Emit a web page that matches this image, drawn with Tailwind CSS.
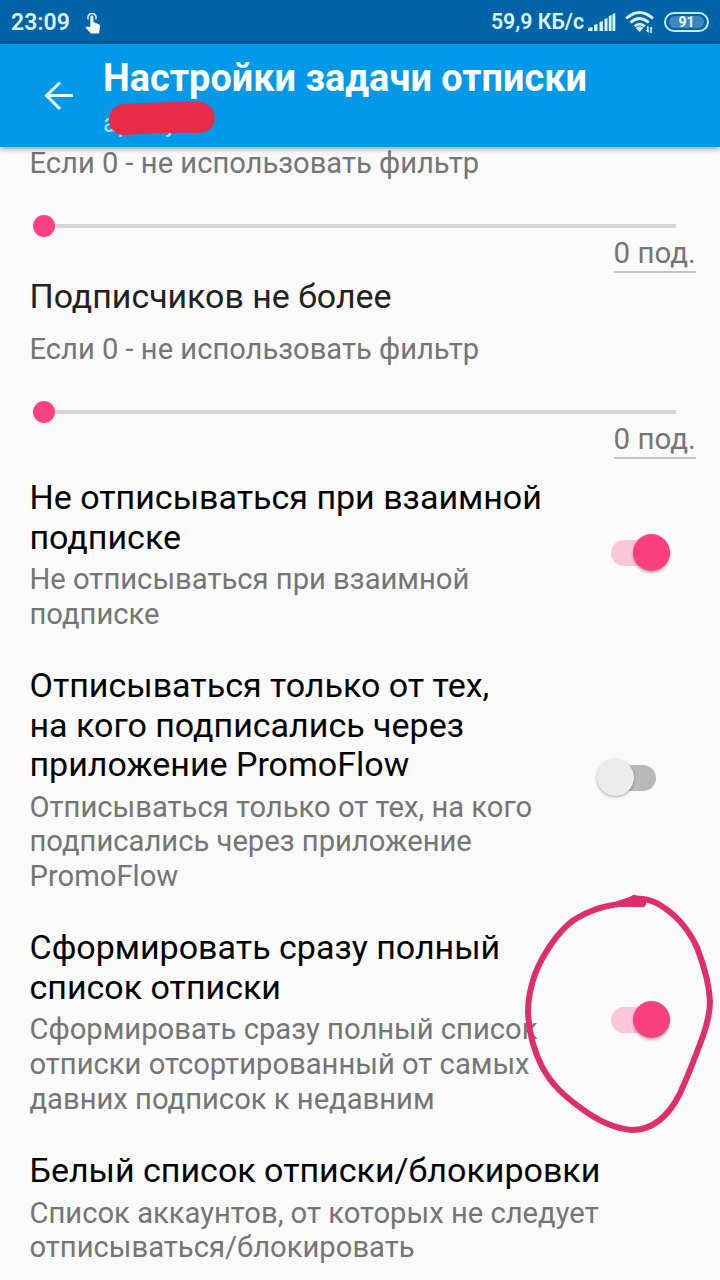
<!DOCTYPE html>
<html lang="ru">
<head>
<meta charset="utf-8">
<title>Настройки задачи отписки</title>
<script src="https://cdn.jsdelivr.net/npm/@tailwindcss/browser@4"></script>
</head>
<body class="bg-[#fafafa]">
<div class="relative flex h-[1280px] w-[720px] flex-col overflow-hidden bg-[#fafafa] font-[Roboto,sans-serif]">
  <div class="flex h-[44px] shrink-0 items-center bg-[#0064a6] pl-[11px] pr-[11px] text-[#d9f3ff]">
    <span class="w-[60px] whitespace-nowrap text-[23px] font-semibold leading-[45px]">23:09</span>
    <svg class="ml-[14px] mt-[2px]" width="17" height="22" viewBox="0 0 17 22"><path d="M3.2 7.500A4.200 4.200 0 1 1 10.800 7.500" fill="none" stroke="currentColor" stroke-width="1.600"/><path d="M5.300 5.200q0-1.700 1.600-1.700t1.600 1.700V10l5.300 2.200q1.400.6 1.200 2.200l-.8 6q-.2 1.200-1.400 1.200H6.800q-.8 0-1.300-.6L.5 15.800l.8-.9q.5-.5 1.200-.3l2.800.7z" fill="#f2fbff"/></svg>
    <span class="ml-auto whitespace-nowrap text-[21.300px] font-semibold leading-[46px]">59,9 КБ/с</span>
    <svg class="ml-[4px]" width="28" height="20" viewBox="0 0 28 20" fill="currentColor"><path d="M0 19v-3l4.500-1v4zM6 19v-6l3.500-1v7zM11.500 19V10l3.500-1v10zM16.500 19V7l3-1v13zM20.800 19V4l2.800-1v16zM24.500 19V2l2.800-1v18z"/></svg>
    <svg class="ml-[9px]" width="30" height="24" viewBox="0 0 30 24"><g fill="none" stroke="currentColor" stroke-width="2.800"><path d="M1.200 8.500Q14.500-3.500 28 8.500"/><path d="M5.500 12.500q9-8 18.300 0"/><path d="M9.500 16.300q5-4.300 10.300 0"/></g><path d="M10.800 18q3.800-2.800 7.600 0l-3.800 4z" fill="currentColor"/><path d="M22.800 16.500v5.500M26 17v6" stroke="currentColor" stroke-width="1.600"/><path d="M20.600 20h3v3zM28.300 19h-3v-2z" fill="currentColor"/></svg>
    <div class="ml-[9px] flex h-[20px] w-[45px] items-center justify-center rounded-full border-2 border-[#c6eaff] p-[3px]"><div class="flex h-[12px] w-full items-center justify-center rounded-full bg-[#3c87c0] text-[14px] font-bold leading-none text-[#eafaff]">91</div></div>
  </div>
  <header class="relative z-10 flex h-[103px] shrink-0 bg-[#0099e8] shadow-[0_1px_6px_rgba(0,0,0,0.5)]">
    <svg class="ml-[44px] mt-[37px] shrink-0" width="30" height="30" viewBox="0 0 30 30" fill="none" stroke="#e6faff" stroke-width="3"><path d="M29 14.500H2.500M16 1.500L2.500 14.500 16 28"/></svg>
    <div class="ml-[29px] flex flex-col">
      <h1 class="mt-[12px] whitespace-nowrap text-[37.900px] font-bold leading-[44px] text-white">Настройки задачи отписки</h1>
      <div class="relative mt-[9px] h-[30px] w-[120px] text-[25px] leading-[30px] text-[#a9ddf7]"><span>a</span><span class="ml-[1px]">p</span><span class="ml-[35px]">j</span>
        <svg class="absolute left-[5px] top-[-9px]" width="108" height="36" viewBox="0 0 108 36"><path d="M17 4Q52 2 90 1.500C112 3 112 32 92 33Q56 32 18 35C-4 36-5 5 17 4z" fill="#e62b4b"/></svg>
      </div>
    </div>
  </header>
  <main class="flex flex-col pl-[29.500px] text-[#757575]">
    <p class="mt-[-1px] text-[29.150px] leading-[35px]">Если 0 - не использовать фильтр</p>
    <div class="mt-[34px] flex h-[22px] items-center"><div class="ml-[3px] size-[22px] rounded-full bg-[#ff4081]"></div><div class="h-[4px] w-[621px] bg-[#d5d5d5]"></div></div>
    <div class="ml-[584px] mt-[2px] h-[34px] w-[82px] whitespace-nowrap border-b-2 border-[#c4c4c4] text-[29.500px] leading-[28px]">0 под.</div>
    <h2 class="mt-[4px] text-[33.900px] leading-[40px] text-[#212121]">Подписчиков не более</h2>
    <p class="mt-[15px] text-[29.150px] leading-[35px]">Если 0 - не использовать фильтр</p>
    <div class="mt-[34px] flex h-[22px] items-center"><div class="ml-[3px] size-[22px] rounded-full bg-[#ff4081]"></div><div class="h-[4px] w-[621px] bg-[#d5d5d5]"></div></div>
    <div class="ml-[584px] mt-[2px] h-[34px] w-[82px] whitespace-nowrap border-b-2 border-[#c4c4c4] text-[29.500px] leading-[28px]">0 под.</div>

    <section class="mt-[19px] flex h-[154px] items-start">
      <div class="w-[567.500px] whitespace-nowrap"><h2 class="text-[34px] leading-[39.500px] text-black">Не отписываться при взаимной<br>подписке</h2><p class="mt-[5px] text-[29.200px] leading-[34.800px]">Не отписываться при взаимной<br>подписке</p></div>
      <div class="mt-[61.500px] flex h-[26px] w-[72.500px] items-center pl-[14px]"><div class="flex h-[26px] w-[58.500px] items-center justify-end rounded-full bg-[#fdc5d9]"><div class="size-[37px] shrink-0 rounded-full bg-[#fb3f7f] shadow-[0_2px_3px_rgba(0,0,0,0.3)]"></div></div></div>
    </section>
    <section class="mt-[34px] flex h-[227px] items-start">
      <div class="w-[567px] whitespace-nowrap"><h2 class="text-[34px] leading-[39.500px] text-black">Отписываться только от тех,<br>на кого подписались через<br>приложение PromoFlow</h2><p class="mt-[5px] text-[29.200px] leading-[34.800px]">Отписываться только от тех, на кого<br>подписались через приложение<br>PromoFlow</p></div>
      <div class="mt-[98.500px] flex h-[26px] w-[59px] items-center rounded-full bg-gradient-to-r from-transparent from-50% to-[#b9b9b9] to-50%"><div class="size-[37px] shrink-0 rounded-full bg-[#ececec] shadow-[0_1px_3px_rgba(0,0,0,0.35)]"></div></div>
    </section>
    <section class="mt-[35px] flex h-[188px] items-start">
      <div class="w-[567.500px] whitespace-nowrap"><h2 class="text-[34px] leading-[39.500px] text-black">Сформировать сразу полный<br>список отписки</h2><p class="mt-[5px] text-[29.200px] leading-[34.800px]">Сформировать сразу полный список<br>отписки отсортированный от самых<br>давних подписок к недавним</p></div>
      <div class="mt-[78.500px] flex h-[26px] w-[72.500px] items-center pl-[14px]"><div class="flex h-[26px] w-[58.500px] items-center justify-end rounded-full bg-[#fdc5d9]"><div class="size-[37px] shrink-0 rounded-full bg-[#fb3f7f] shadow-[0_2px_3px_rgba(0,0,0,0.3)]"></div></div></div>
    </section>
    <section class="mt-[35px] whitespace-nowrap">
      <h2 class="text-[34px] leading-[39.500px] text-black">Белый список отписки/блокировки</h2><p class="mt-[5px] text-[29.200px] leading-[34.800px]">Список аккаунтов, от которых не следует<br>отписываться/блокировать</p>
    </section>
  </main>
  <svg class="absolute left-[510px] top-[880px]" width="210" height="270" viewBox="0 0 630 810" fill="none" stroke="#df2f6b" stroke-width="18" stroke-linejoin="round"><path d="M400 70C310 65 240 88 186 124C145 155 100 220 76 280C60 325 54 360 54 395C56 455 68 505 96 560C125 615 165 650 214 685C260 720 315 745 365 750C430 750 475 710 510 640C535 585 560 520 580 465C595 420 600 395 600 365C598 310 583 260 562 205C535 145 500 105 450 75C415 54 390 54 370 58L318 74"/><path d="M310 68L360 50 370 44 408 52 408 74 402 82 320 80z" fill="#df2f6b" stroke="none"/></svg>
</div>
</body>
</html>
